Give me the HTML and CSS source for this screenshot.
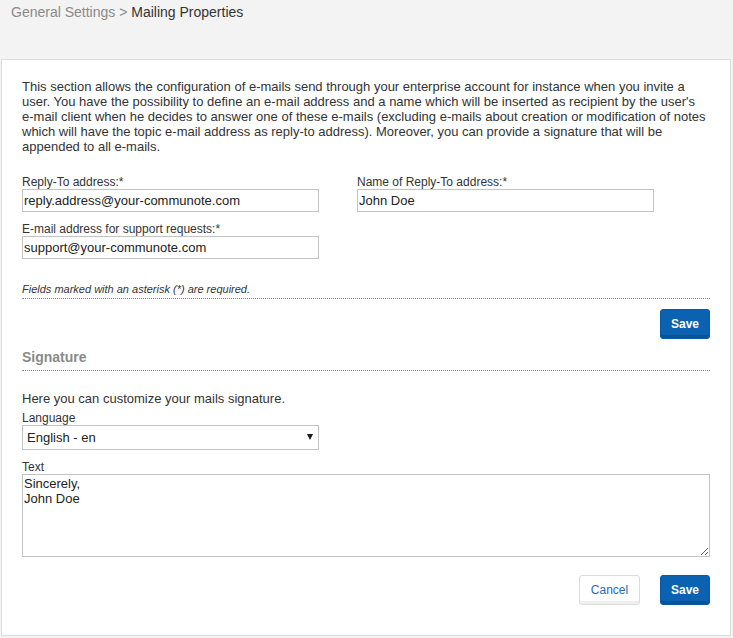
FILE: index.html
```html
<!DOCTYPE html>
<html lang="en">
<head>
<meta charset="utf-8">
<title>Mailing Properties</title>
<link rel="stylesheet" href="styles.css">
</head>
<body>
  <div class="breadcrumb">
    <span class="crumb">General Settings &gt;</span>
    <span class="crumb-current">Mailing Properties</span>
  </div>

  <div class="panel">
    <p class="intro">This section allows the configuration of e-mails send through your enterprise account for instance when you invite a user. You have the possibility to define an e-mail address and a name which will be inserted as recipient by the user's e-mail client when he decides to answer one of these e-mails (excluding e-mails about creation or modification of notes which will have the topic e-mail address as reply-to address). Moreover, you can provide a signature that will be appended to all e-mails.</p>

    <div class="field-grid">
      <div class="field">
        <label class="label" for="reply">Reply-To address:*</label>
        <input class="input" id="reply" type="text" value="reply.address@your-communote.com">
      </div>
      <div class="field">
        <label class="label" for="replyName">Name of Reply-To address:*</label>
        <input class="input" id="replyName" type="text" value="John Doe">
      </div>
      <div class="field">
        <label class="label" for="support">E-mail address for support requests:*</label>
        <input class="input" id="support" type="text" value="support@your-communote.com">
      </div>
    </div>

    <p class="note">Fields marked with an asterisk (*) are required.</p>

    <div class="actions">
      <button class="btn btn-primary" type="button">Save</button>
    </div>

    <h2 class="section-title">Signature</h2>

    <p class="sig-intro">Here you can customize your mails signature.</p>

    <label class="label" for="lang">Language</label>
    <div class="select-wrap">
      <select class="select" id="lang">
        <option>English - en</option>
      </select>
    </div>

    <label class="label label-text" for="sig">Text</label>
    <textarea class="textarea" id="sig" spellcheck="false">Sincerely,
John Doe</textarea>

    <div class="actions actions-bottom">
      <button class="btn btn-default" type="button">Cancel</button>
      <button class="btn btn-primary" type="button">Save</button>
    </div>
  </div>
</body>
</html>
```

FILE: styles.css
```css
* {
  box-sizing: border-box;
}

html, body {
  margin: 0;
  padding: 0;
}

body {
  background: #f3f3f3;
  font-family: "Liberation Sans", Arial, sans-serif;
  color: #333;
  font-size: 13px;
}

.breadcrumb {
  height: 59px;
  padding: 4px 0 0 11px;
  font-size: 14px;
  line-height: 16px;
}

.crumb {
  color: #8a8a8a;
}

.crumb-current {
  color: #333;
}

.panel {
  width: 730px;
  margin: 0 0 0 1px;
  background: #fff;
  border: 1px solid #dcdcdc;
  padding: 19px 20px 30px 20px;
}

.intro {
  margin: 0 0 21px 0;
  font-size: 13px;
  line-height: 15px;
}

.field-grid {
  display: grid;
  grid-template-columns: 297px 297px;
  column-gap: 38px;
  row-gap: 10px;
}

.field {
  display: flex;
  flex-direction: column;
}

.label {
  display: block;
  font-size: 12px;
  line-height: 14px;
  color: #333;
}

.input {
  width: 297px;
  height: 23px;
  margin: 0;
  padding: 0 1px;
  border: 1px solid #c3c3c3;
  border-radius: 0;
  font-family: "Liberation Sans", Arial, sans-serif;
  font-size: 13px;
  color: #222;
  background: #fff;
  outline: none;
}

.note {
  margin: 24px 0 0 0;
  padding-bottom: 2px;
  font-size: 11px;
  line-height: 13px;
  font-style: italic;
  color: #333;
  border-bottom: 1px dotted #8c8c8c;
}

.actions {
  display: flex;
  justify-content: flex-end;
  gap: 20px;
  margin-top: 10px;
}

.actions-bottom {
  margin-top: 18px;
}

.btn {
  height: 30px;
  margin: 0;
  padding: 0 10px;
  font-family: "Liberation Sans", Arial, sans-serif;
  font-size: 12px;
  line-height: 28px;
  border-radius: 3px;
  cursor: pointer;
}

.btn-primary {
  width: 50px;
  padding: 0;
  font-weight: bold;
  color: #fff;
  background: #0b62b0;
  border: 1px solid #0a5aa3;
  box-shadow: inset 0 -3px 0 #09529a;
}

.btn-default {
  width: 61px;
  padding: 0;
  color: #2a67ad;
  background: #fff;
  border: 1px solid #dcdcdc;
  box-shadow: inset 0 -3px 0 #efefef;
}

.section-title {
  margin: 10px 0 0 0;
  padding-bottom: 5px;
  font-size: 14px;
  line-height: 16px;
  font-weight: bold;
  color: #8a8a8a;
  border-bottom: 1px dotted #8c8c8c;
}

.sig-intro {
  margin: 20px 0 5px 0;
  font-size: 13px;
  line-height: 15px;
}

.select-wrap {
  position: relative;
  width: 297px;
}

.select-wrap::after {
  content: "";
  position: absolute;
  left: 285px;
  top: 9px;
  width: 0;
  height: 0;
  border-left: 3px solid transparent;
  border-right: 3px solid transparent;
  border-top: 6px solid #1a1a1a;
  pointer-events: none;
}

.select {
  display: block;
  width: 297px;
  height: 25px;
  margin: 0;
  padding: 0 20px 0 4px;
  border: 1px solid #c3c3c3;
  border-radius: 0;
  background: #fff;
  font-family: "Liberation Sans", Arial, sans-serif;
  font-size: 13px;
  color: #222;
  -webkit-appearance: none;
  appearance: none;
  outline: none;
}

.label-text {
  margin-top: 10px;
}

.textarea {
  display: block;
  width: 688px;
  height: 83px;
  margin: 0;
  padding: 1px 1px;
  border: 1px solid #c3c3c3;
  border-radius: 0;
  font-family: "Liberation Sans", Arial, sans-serif;
  font-size: 13px;
  line-height: 15px;
  color: #222;
  background: #fff;
  outline: none;
}
```
